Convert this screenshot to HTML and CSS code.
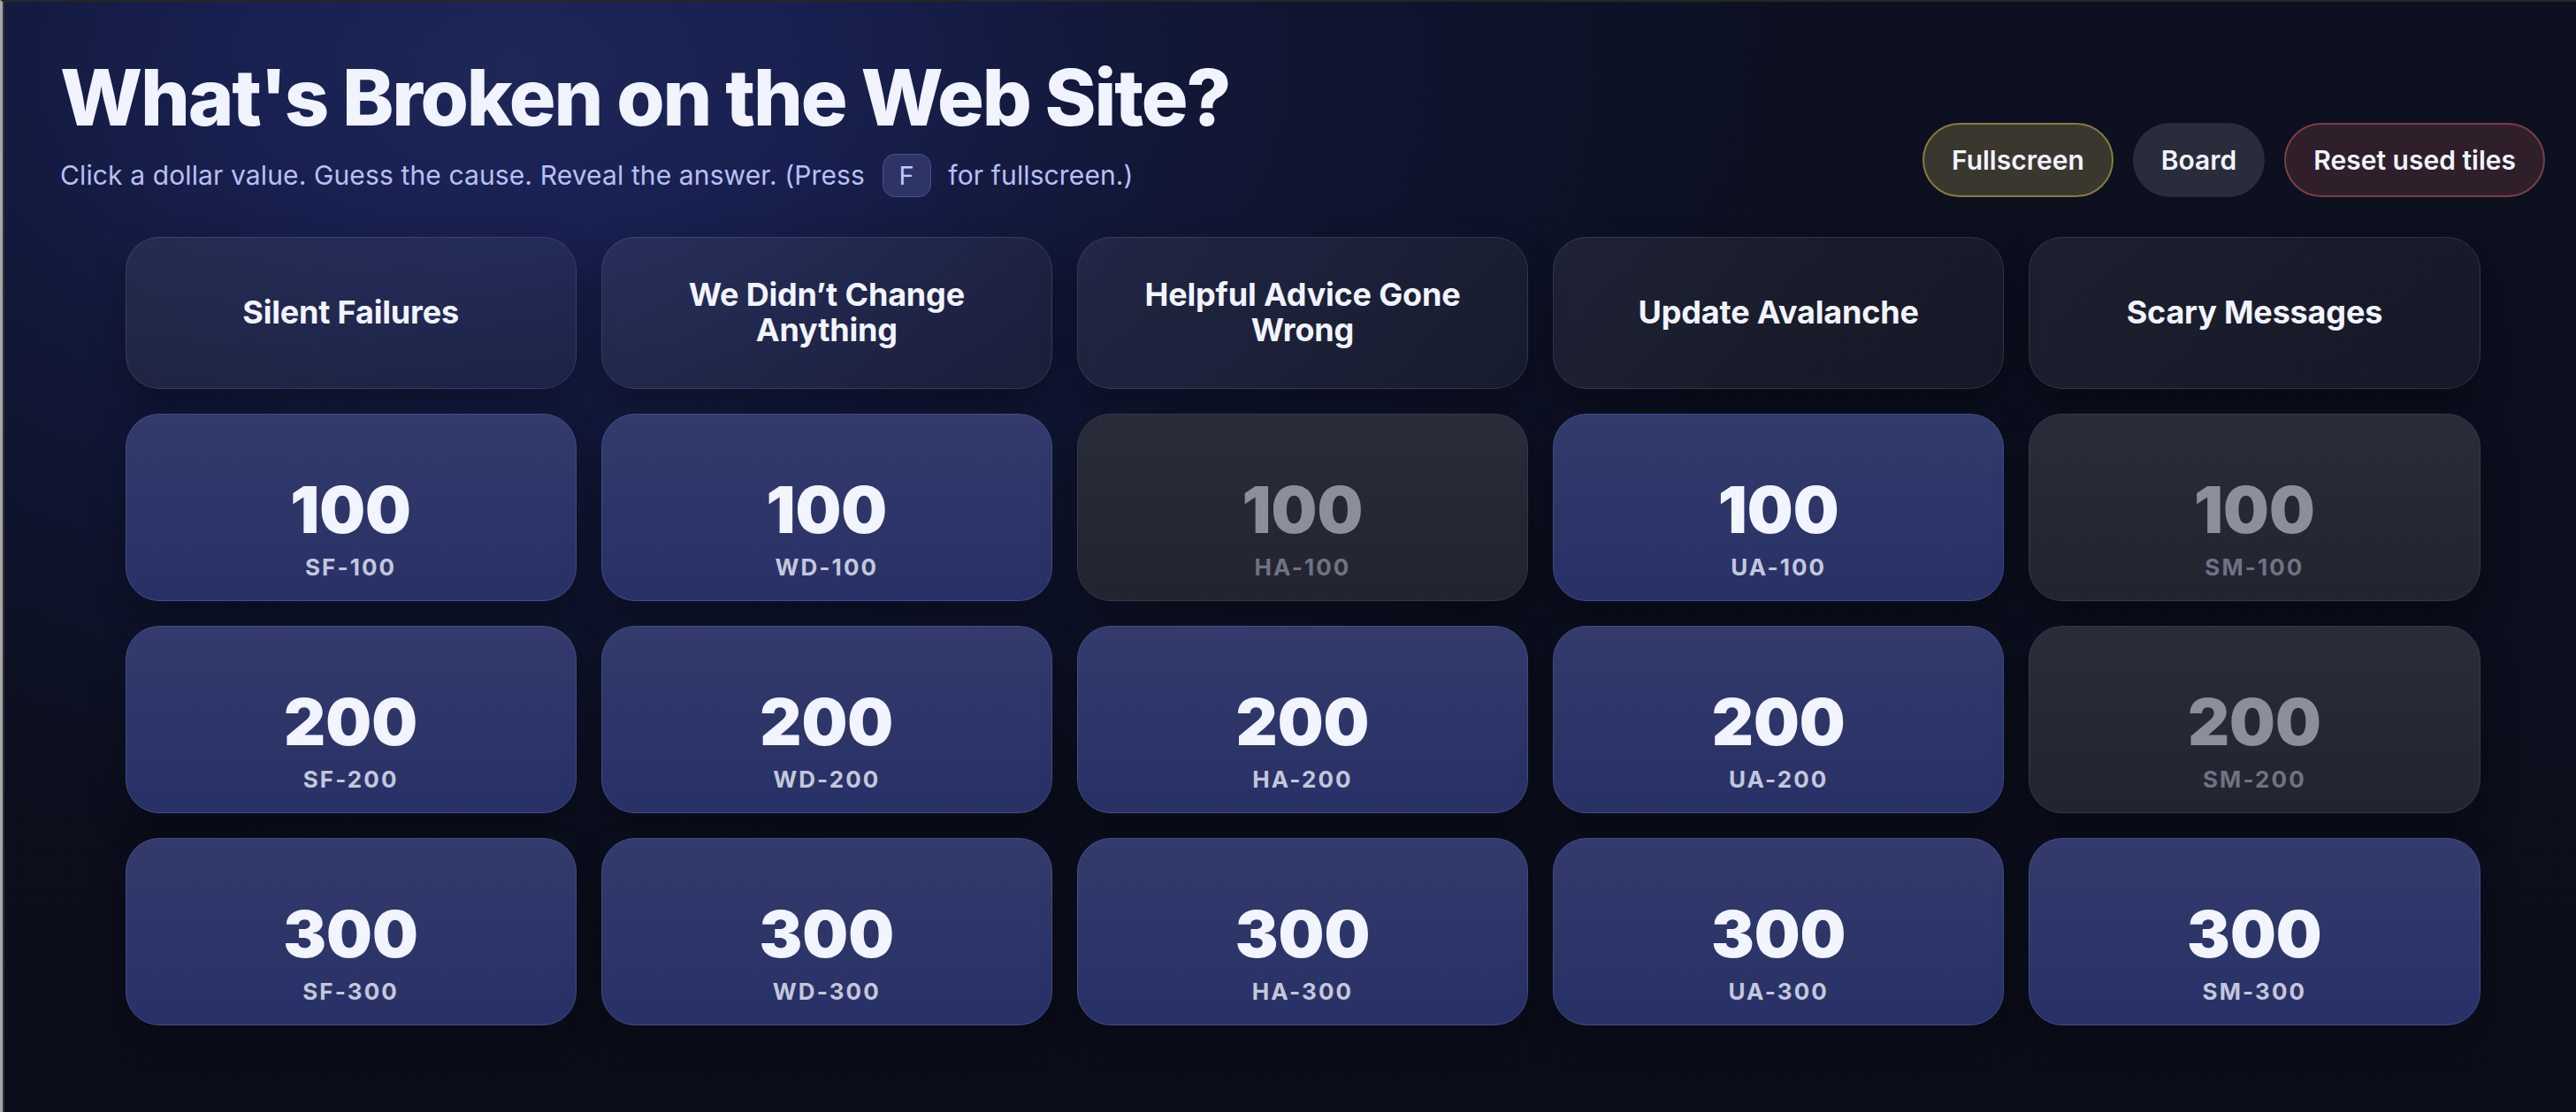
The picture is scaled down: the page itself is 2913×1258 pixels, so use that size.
FILE: index.html
```html
<!DOCTYPE html>
<html lang="en">
<head>
    <meta charset="UTF-8">
    <meta name="viewport" content="width=device-width, initial-scale=1.0">
    <title>What's Broken on the Web Site?</title>
    <link rel="stylesheet" href="styles.css">
</head>
<body>
    <div class="page">
        <header class="top-bar">
            <div class="intro">
                <h1>What's Broken on the Web Site?</h1>
                <p class="subtitle">Click a dollar value. Guess the cause. Reveal the answer. (Press <kbd>F</kbd> for fullscreen.)</p>
            </div>
            <div class="controls">
                <button class="btn btn-fullscreen" id="fullscreen">Fullscreen</button>
                <button class="btn btn-board" id="board">Board</button>
                <button class="btn btn-reset" id="reset">Reset used tiles</button>
            </div>
        </header>

        <main class="board">
            <!-- Category row -->
            <div class="category">Silent Failures</div>
            <div class="category">We Didn’t Change Anything</div>
            <div class="category">Helpful Advice Gone Wrong</div>
            <div class="category">Update Avalanche</div>
            <div class="category">Scary Messages</div>

            <!-- 100 row -->
            <div class="tile"><span class="value">100</span><span class="code">SF-100</span></div>
            <div class="tile"><span class="value">100</span><span class="code">WD-100</span></div>
            <div class="tile used"><span class="value">100</span><span class="code">HA-100</span></div>
            <div class="tile"><span class="value">100</span><span class="code">UA-100</span></div>
            <div class="tile used"><span class="value">100</span><span class="code">SM-100</span></div>

            <!-- 200 row -->
            <div class="tile"><span class="value">200</span><span class="code">SF-200</span></div>
            <div class="tile"><span class="value">200</span><span class="code">WD-200</span></div>
            <div class="tile"><span class="value">200</span><span class="code">HA-200</span></div>
            <div class="tile"><span class="value">200</span><span class="code">UA-200</span></div>
            <div class="tile used"><span class="value">200</span><span class="code">SM-200</span></div>

            <!-- 300 row -->
            <div class="tile"><span class="value">300</span><span class="code">SF-300</span></div>
            <div class="tile"><span class="value">300</span><span class="code">WD-300</span></div>
            <div class="tile"><span class="value">300</span><span class="code">HA-300</span></div>
            <div class="tile"><span class="value">300</span><span class="code">UA-300</span></div>
            <div class="tile"><span class="value">300</span><span class="code">SM-300</span></div>
        </main>
    </div>
</body>
</html>
```

FILE: styles.css
```css
* {
    box-sizing: border-box;
}
html, body {
    height: 100%;
}
body {
    margin: 0;
    font-family: Inter, "Noto Sans", Arial, sans-serif;
    color: #f2f4ff;
    background-color: #0b0e1a;
    background-image:
        radial-gradient(ellipse 1500px 900px at 20% 6%, #1f2759 0%, #182050 22%, #111736 50%, rgba(11, 14, 26, 0) 100%),
        linear-gradient(180deg, #0c1020 0%, #0b0e1a 100%);
    border-top: 2px solid #262626;
    border-left: 3px solid #a8a8a8;
    overflow: hidden;
}
.page {
    min-height: 100%;
    border-left: 2px solid #30323a;
    padding: 60px 35px 40px 63px;
}
.top-bar {
    display: flex;
    justify-content: space-between;
    align-items: flex-end;
}
h1 {
    margin: 0;
    font-size: 88px;
    font-weight: 800;
    line-height: 1.1;
    letter-spacing: -0.025em;
    color: #f1f3ff;
}
.subtitle {
    margin: 15px 0 0;
    font-size: 30px;
    line-height: 1.2;
    letter-spacing: 0.004em;
    color: #b7c0f5;
}
kbd {
    display: inline-block;
    margin: 0 11px;
    padding: 6px 18px;
    font-family: inherit;
    font-size: 29px;
    line-height: 35px;
    color: #c2caff;
    background-color: #2d3566;
    border: 1px solid #4a5385;
    border-radius: 14px;
}
.controls {
    display: flex;
    gap: 22px;
}
.btn {
    font-family: inherit;
    font-size: 30px;
    font-weight: 600;
    line-height: 1.2;
    color: #f2f4ff;
    padding: 22px 31px;
    border-radius: 999px;
    border: 2px solid transparent;
    cursor: pointer;
}
.btn-fullscreen {
    background-color: #3a372f;
    border-color: #8a7a3d;
}
.btn-board {
    background-color: #292d3b;
    border: 0;
    padding: 23px 32px;
}
.btn-reset {
    background-color: #2e1f2b;
    border-color: #7d3d46;
}
.board {
    display: grid;
    grid-template-columns: repeat(5, 1fr);
    grid-template-rows: 172px repeat(3, 212px);
    gap: 28px;
    max-width: 2663px;
    margin: 45px auto 0;
}
.category {
    display: flex;
    align-items: center;
    justify-content: center;
    text-align: center;
    padding: 0 40px;
    font-size: 36px;
    font-weight: 700;
    line-height: 1.1;
    letter-spacing: -0.005em;
    background: linear-gradient(135deg, rgba(255, 255, 255, 0.07), rgba(255, 255, 255, 0.045));
    border: 1.5px solid rgba(255, 255, 255, 0.11);
    border-radius: 38px;
    box-shadow: 0 18px 40px rgba(0, 0, 0, 0.3);
}
.tile {
    display: flex;
    flex-direction: column;
    align-items: center;
    justify-content: center;
    padding-top: 50px;
    background: linear-gradient(180deg, #333b6c 0%, #283166 100%);
    border: 1.5px solid #414d88;
    border-radius: 38px;
    box-shadow: 0 18px 40px rgba(0, 0, 0, 0.3);
    cursor: pointer;
}
.value {
    font-size: 73px;
    font-weight: 900;
    line-height: 1;
    color: #f2f4ff;
}
.code {
    margin-top: 13px;
    font-size: 26px;
    font-weight: 700;
    line-height: 1.2;
    letter-spacing: 0.08em;
    color: #c3c7dc;
}
.tile.used {
    background: linear-gradient(180deg, #292d3a 0%, #22252f 100%);
    border-color: #353946;
    cursor: default;
}
.tile.used .value {
    color: #8b8e9b;
}
.tile.used .code {
    color: #6f7383;
}
```
